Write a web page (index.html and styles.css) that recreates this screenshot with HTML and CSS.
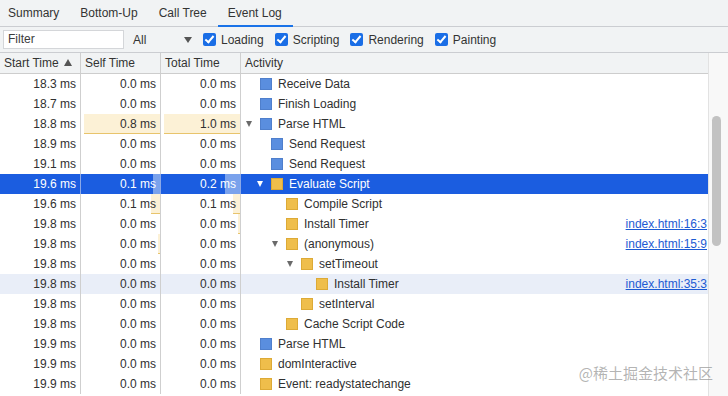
FILE: index.html
```html
<!DOCTYPE html>
<html>

<head>
    <title>Event Log</title>
    <link rel="stylesheet" href="styles.css">
</head>

<body>
    <div class="tabs">
        <div class="tab">Summary</div>
        <div class="tab">Bottom-Up</div>
        <div class="tab">Call Tree</div>
        <div class="tab active">Event Log</div>
    </div>

    <div class="toolbar">
        <div class="filter">Filter</div>
        <div class="select"><span>All</span><span class="caret"></span></div>
        <div class="check"><span class="box"></span>Loading</div>
        <div class="check"><span class="box"></span>Scripting</div>
        <div class="check"><span class="box"></span>Rendering</div>
        <div class="check"><span class="box"></span>Painting</div>
    </div>

    <div class="panel">
        <div class="table">
            <div class="row head">
                <div class="cell">Start Time <span class="sort"></span></div>
                <div class="cell">Self Time</div>
                <div class="cell">Total Time</div>
                <div class="cell">Activity</div>
            </div>

            <div class="row">
                <div class="cell num">18.3 ms</div>
                <div class="cell num">0.0 ms</div>
                <div class="cell num">0.0 ms</div>
                <div class="cell act lvl0"><span class="toggle"></span><span class="sq loading"></span>Receive Data</div>
            </div>
            <div class="row">
                <div class="cell num">18.7 ms</div>
                <div class="cell num">0.0 ms</div>
                <div class="cell num">0.0 ms</div>
                <div class="cell act lvl0"><span class="toggle"></span><span class="sq loading"></span>Finish Loading</div>
            </div>
            <div class="row">
                <div class="cell num">18.8 ms</div>
                <div class="cell num bar" style="--w: 76px">0.8 ms</div>
                <div class="cell num bar" style="--w: 76px">1.0 ms</div>
                <div class="cell act lvl0"><span class="toggle open"></span><span class="sq loading"></span>Parse HTML</div>
            </div>
            <div class="row">
                <div class="cell num">18.9 ms</div>
                <div class="cell num">0.0 ms</div>
                <div class="cell num">0.0 ms</div>
                <div class="cell act lvl1"><span class="toggle"></span><span class="sq loading"></span>Send Request</div>
            </div>
            <div class="row">
                <div class="cell num">19.1 ms</div>
                <div class="cell num">0.0 ms</div>
                <div class="cell num">0.0 ms</div>
                <div class="cell act lvl1"><span class="toggle"></span><span class="sq loading"></span>Send Request</div>
            </div>
            <div class="row selected">
                <div class="cell num">19.6 ms</div>
                <div class="cell num bar" style="--w: 7px">0.1 ms</div>
                <div class="cell num bar" style="--w: 15px">0.2 ms</div>
                <div class="cell act lvl1"><span class="toggle open"></span><span class="sq scripting"></span>Evaluate Script</div>
            </div>
            <div class="row">
                <div class="cell num">19.6 ms</div>
                <div class="cell num bar" style="--w: 9px">0.1 ms</div>
                <div class="cell num bar" style="--w: 7px">0.1 ms</div>
                <div class="cell act lvl2"><span class="toggle"></span><span class="sq scripting"></span>Compile Script</div>
            </div>
            <div class="row">
                <div class="cell num">19.8 ms</div>
                <div class="cell num">0.0 ms</div>
                <div class="cell num bar" style="--w: 2px">0.0 ms</div>
                <div class="cell act lvl2"><span class="toggle"></span><span class="sq scripting"></span>Install Timer<a class="link">index.html:16:3</a></div>
            </div>
            <div class="row">
                <div class="cell num">19.8 ms</div>
                <div class="cell num bar" style="--w: 2px">0.0 ms</div>
                <div class="cell num">0.0 ms</div>
                <div class="cell act lvl2"><span class="toggle open"></span><span class="sq scripting"></span>(anonymous)<a class="link">index.html:15:9</a></div>
            </div>
            <div class="row">
                <div class="cell num">19.8 ms</div>
                <div class="cell num">0.0 ms</div>
                <div class="cell num">0.0 ms</div>
                <div class="cell act lvl3"><span class="toggle open"></span><span class="sq scripting"></span>setTimeout</div>
            </div>
            <div class="row hover">
                <div class="cell num">19.8 ms</div>
                <div class="cell num">0.0 ms</div>
                <div class="cell num">0.0 ms</div>
                <div class="cell act lvl4"><span class="toggle"></span><span class="sq scripting"></span>Install Timer<a class="link">index.html:35:3</a></div>
            </div>
            <div class="row">
                <div class="cell num">19.8 ms</div>
                <div class="cell num">0.0 ms</div>
                <div class="cell num">0.0 ms</div>
                <div class="cell act lvl3"><span class="toggle"></span><span class="sq scripting"></span>setInterval</div>
            </div>
            <div class="row">
                <div class="cell num">19.8 ms</div>
                <div class="cell num">0.0 ms</div>
                <div class="cell num">0.0 ms</div>
                <div class="cell act lvl2"><span class="toggle"></span><span class="sq scripting"></span>Cache Script Code</div>
            </div>
            <div class="row">
                <div class="cell num">19.9 ms</div>
                <div class="cell num">0.0 ms</div>
                <div class="cell num">0.0 ms</div>
                <div class="cell act lvl0"><span class="toggle"></span><span class="sq loading"></span>Parse HTML</div>
            </div>
            <div class="row">
                <div class="cell num">19.9 ms</div>
                <div class="cell num">0.0 ms</div>
                <div class="cell num">0.0 ms</div>
                <div class="cell act lvl0"><span class="toggle"></span><span class="sq scripting"></span>domInteractive</div>
            </div>
            <div class="row">
                <div class="cell num">19.9 ms</div>
                <div class="cell num">0.0 ms</div>
                <div class="cell num">0.0 ms</div>
                <div class="cell act lvl0"><span class="toggle"></span><span class="sq scripting"></span>Event: readystatechange</div>
            </div>
        </div>

        <div class="scrollbar">
            <div class="thumb"></div>
        </div>
    </div>

    <div class="watermark">@稀土掘金技术社区</div>
</body>

</html>
```

FILE: styles.css
```css
* {
    box-sizing: border-box;
}

body {
    margin: 0;
    width: 728px;
    height: 396px;
    overflow: hidden;
    position: relative;
    font-family: "Liberation Sans", Arial, sans-serif;
    font-size: 12px;
    color: #303030;
    background-color: #FFFFFF;
}

/* tabs */

.tabs {
    display: flex;
    align-items: flex-start;
    height: 27px;
    background-color: #F1F3F4;
    border-bottom: 1px solid #CBCDD1;
}

.tab {
    padding: 0 11px 0 10px;
    height: 26px;
    line-height: 26px;
    color: #333333;
}

.tab:first-child {
    padding-left: 8px;
}

.tab.active {
    height: 27px;
    margin-bottom: -1px;
    border-bottom: 2px solid #1A73E8;
}

/* toolbar */

.toolbar {
    display: flex;
    align-items: center;
    height: 26px;
    padding-left: 3px;
    background-color: #F1F3F4;
    border-bottom: 1px solid #CBCDD1;
}

.filter {
    width: 121px;
    height: 19px;
    line-height: 17px;
    padding-left: 4px;
    background-color: #FFFFFF;
    border: 1px solid #D4D6D9;
    color: #3C3C3C;
}

.select {
    display: flex;
    align-items: center;
    justify-content: space-between;
    width: 59px;
    margin-left: 9px;
    color: #333333;
}

.caret {
    width: 0;
    height: 0;
    border-left: 4px solid transparent;
    border-right: 4px solid transparent;
    border-top: 6px solid #555555;
}

.check {
    display: flex;
    align-items: center;
    margin-left: 11px;
    color: #333333;
}

.box {
    position: relative;
    width: 13px;
    height: 13px;
    margin-right: 5px;
    border-radius: 2px;
    background-color: #1A6EE6;
}

.box::after {
    content: "";
    position: absolute;
    left: 4px;
    top: 1px;
    width: 3px;
    height: 7px;
    border-right: 2px solid #FFFFFF;
    border-bottom: 2px solid #FFFFFF;
    transform: rotate(40deg);
}

/* table */

.panel {
    display: flex;
    height: 343px;
}

.table {
    width: 708px;
}

.row {
    display: grid;
    grid-template-columns: 81px 80px 80px 1fr;
    height: 20px;
    line-height: 20px;
}

.cell {
    white-space: nowrap;
    overflow: hidden;
    border-right: 1px solid #CFCFCF;
}

.cell:last-child {
    border-right: none;
}

.row.head {
    height: 21px;
    line-height: 21px;
    background-color: #F1F3F4;
    border-bottom: 1px solid #CDCDCD;
    color: #333333;
}

.row.head .cell {
    padding-left: 4px;
}

.sort {
    display: inline-block;
    margin-left: 2px;
    width: 0;
    height: 0;
    vertical-align: 1px;
    border-left: 4px solid transparent;
    border-right: 4px solid transparent;
    border-bottom: 7px solid #555555;
}

.num {
    text-align: right;
    padding-right: 4px;
}

.bar {
    background:
        linear-gradient(#E8C46C, #E8C46C) right bottom / var(--w) 1px no-repeat,
        linear-gradient(#FCF1D6, #FCF1D6) right top / var(--w) 100% no-repeat;
}

.act {
    display: flex;
    align-items: center;
    padding-right: 1px;
}

.lvl0 { padding-left: 5px; }
.lvl1 { padding-left: 16px; }
.lvl2 { padding-left: 31px; }
.lvl3 { padding-left: 46px; }
.lvl4 { padding-left: 61px; }

.toggle {
    flex: none;
    width: 14px;
    height: 6px;
}

.toggle.open::before {
    content: "";
    display: block;
    width: 0;
    height: 0;
    border-left: 3.5px solid transparent;
    border-right: 3.5px solid transparent;
    border-top: 6px solid #6A6A6A;
}

.sq {
    flex: none;
    width: 12px;
    height: 12px;
    margin-right: 6px;
}

.loading {
    background-color: #5A8EDF;
    border: 1px solid #4F7FCC;
}

.scripting {
    background-color: #EFBE4B;
    border: 1px solid #DDAA36;
}

.link {
    margin-left: auto;
    color: #1C5BD3;
    text-decoration: underline;
}

.row.hover {
    background-color: #E9EEF8;
}

.row.selected {
    background-color: #1B5DE0;
    color: #FFFFFF;
}

.row.selected .cell {
    border-right-color: #8CA9E8;
}

.row.selected .cell:last-child {
    border-right: none;
}

.row.selected .bar {
    background: linear-gradient(#7AA2EC, #7AA2EC) right top / var(--w) 100% no-repeat;
}

.row.selected .toggle.open::before {
    border-top-color: #FFFFFF;
}

/* scrollbar */

.scrollbar {
    width: 20px;
    background-color: #F8F8F8;
    border-left: 1px solid #E2E2E2;
    padding-top: 63px;
    padding-left: 3px;
}

.thumb {
    width: 9px;
    height: 130px;
    border-radius: 5px;
    background-color: #C2C2C2;
}

.watermark {
    position: absolute;
    right: 15px;
    bottom: 13px;
    font-family: "Noto Sans CJK SC", sans-serif;
    font-size: 15px;
    line-height: 20px;
    color: rgba(130, 130, 130, 0.6);
}
```
